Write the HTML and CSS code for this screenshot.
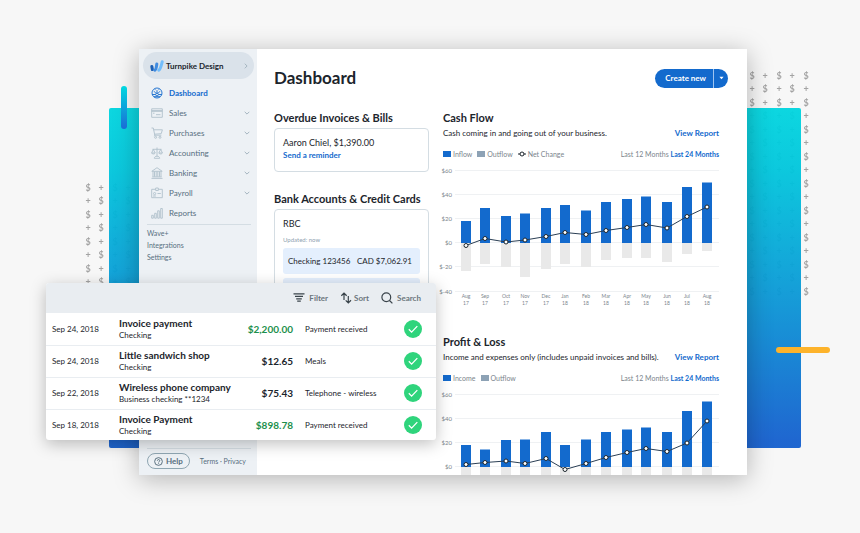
FILE: index.html
```html
<!DOCTYPE html>
<html lang="en">
<head>
  <meta charset="UTF-8">
  <meta name="viewport" content="width=device-width, initial-scale=1.0">
  <title>Dashboard</title>
  <link rel="stylesheet" href="styles.css">
</head>
<body>
  <!-- shared symbols -->
  <svg class="defs" aria-hidden="true">
    <defs>
      <pattern id="signs" width="27" height="27" patternUnits="userSpaceOnUse">
        <text x="7" y="10">$</text><text x="20" y="10">+</text>
        <text x="7" y="23">+</text><text x="20" y="23">$</text>
      </pattern>
      <marker id="dot" markerWidth="8" markerHeight="8" refX="4" refY="4" markerUnits="userSpaceOnUse">
        <circle cx="4" cy="4" r="2" fill="#fff" stroke="#1c252c" stroke-width="1"/>
      </marker>
      <symbol id="chevron" viewBox="0 0 6 6"><path d="M.7 1.8 3 4.1 5.3 1.8"/></symbol>
      <symbol id="check" viewBox="0 0 18 18"><circle cx="9" cy="9" r="9" fill="#2fd47c"/><path d="M4.8 9.3 7.6 12.1 13.3 6.1" fill="none" stroke="#fff" stroke-width="1.3"/></symbol>
    </defs>
  </svg>

  <div class="stage">
    <svg class="signs signs-left" aria-hidden="true"><rect width="100%" height="100%" fill="url(#signs)"/></svg>
    <svg class="signs signs-right" aria-hidden="true"><rect width="100%" height="100%" fill="url(#signs)"/></svg>
    <div class="backdrop"></div>

    <div class="window-wrap">
      <div class="window">
        <aside class="sidebar">
          <button class="company" type="button">
            <svg class="logo" viewBox="0 0 14 12"><path d="M1.8 6.4 2.4 9.6" stroke="#1c5fb5" stroke-width="3"/><path d="M4.8 10.2C6.2 9.8 6.4 6.6 6.8 4" stroke="#3f8be0" stroke-width="3"/><path d="M8.8 10.2C10.6 9.4 11.4 5 12.2 1.8" stroke="#72bdfb" stroke-width="3"/></svg>
            <span>Turnpike Design</span>
            <svg class="chevron right"><use href="#chevron"/></svg>
          </button>
          <nav class="menu">
            <a class="active" href="#"><svg class="icon" viewBox="0 0 12 12"><circle cx="6" cy="6" r="5"/><path d="M1.2 7.5h3.3M7.5 7.5h3.3M6 6.5V3.2M3 4.2l1.8 2M9 4.2l-1.8 2M2.8 9.7h6.4M4 2.3l.5.8M8 2.3l-.5.8"/><circle cx="6" cy="7.5" r="1.4"/></svg>Dashboard</a>
            <a href="#"><svg class="icon" viewBox="0 0 12 12"><path d="M.7 1.8h10.6v8.5H.7zM.7 4.3h10.6M.7 3.6h10.6M5 7.7h4.5M2 6.2h1.5"/></svg>Sales<svg class="chevron"><use href="#chevron"/></svg></a>
            <a href="#"><svg class="icon" viewBox="0 0 12 12"><path d="M.5 1h1.8l1.5 7.2h6.5M2.7 2.8h8.7l-1.2 3.9-6.7.5M3.7 8.2l-.5 1"/><circle cx="4.6" cy="10.3" r="1"/><circle cx="9" cy="10.3" r="1"/></svg>Purchases<svg class="chevron"><use href="#chevron"/></svg></a>
            <a href="#"><svg class="icon" viewBox="0 0 12 12"><path d="M6 .5v8.7M1.5 2.3h9M2.3 2.4.6 6h3.6L2.3 2.4M9.7 2.4 7.8 6h3.6L9.7 2.4M.6 6c.5 1.3 3 1.3 3.6 0M7.8 6c.5 1.3 3 1.3 3.6 0M3.3 11.3c0-2.8 5.4-2.8 5.4 0z"/></svg>Accounting<svg class="chevron"><use href="#chevron"/></svg></a>
            <a href="#"><svg class="icon" viewBox="0 0 12 12"><path d="M.8 4.3 6 .7l5.2 3.6zM.5 11.4h11M1.3 9.9h9.4M2 4.5v5.2M3.5 4.5v5.2M5.2 4.5v5.2M6.8 4.5v5.2M8.5 4.5v5.2M10 4.5v5.2"/></svg>Banking<svg class="chevron"><use href="#chevron"/></svg></a>
            <a href="#"><svg class="icon" viewBox="0 0 12 12"><path d="M4.7 2.3h-4v8.4h10.6V2.3h-4M4.7 1h2.6v2.5H4.7zM6.5 6.5h3.3M2 9h2.9"/><circle cx="3.6" cy="6.6" r="1.1"/></svg>Payroll<svg class="chevron"><use href="#chevron"/></svg></a>
            <a href="#"><svg class="icon" viewBox="0 0 12 12"><path d="M.7 8.3h1.6v2.9H.7zM3.7 6.3h1.6v4.9H3.7zM6.7 3.8h1.6v7.4H6.7zM9.7 1.5h1.6v9.7H9.7z"/></svg>Reports</a>
          </nav>
          <nav class="extra">
            <a href="#">Wave+</a>
            <a href="#">Integrations</a>
            <a href="#">Settings</a>
          </nav>
          <footer class="side-footer">
            <button class="help" type="button"><svg class="help-icon" viewBox="0 0 10 10"><circle cx="5" cy="5" r="4.3"/><path d="M3.7 4.1c0-1.7 2.7-1.7 2.7 0 0 1-1.3 1-1.3 2M5.1 7v.8"/></svg>Help</button>
            <p><a href="#">Terms</a> · <a href="#">Privacy</a></p>
          </footer>
        </aside>

        <main class="main">
          <header class="main-header">
            <h1>Dashboard</h1>
            <div class="create">
              <button class="create-new" type="button">Create new</button>
              <button class="create-more" type="button" aria-label="More"><svg viewBox="0 0 6 4"><path d="M.5.5h5L3 3.5z"/></svg></button>
            </div>
          </header>

          <div class="columns">
            <div class="col-left">
              <section>
                <h2>Overdue Invoices &amp; Bills</h2>
                <div class="box">
                  <p class="box-title">Aaron Chiel, $1,390.00</p>
                  <a class="link" href="#">Send a reminder</a>
                </div>
              </section>
              <section class="bank">
                <h2>Bank Accounts &amp; Credit Cards</h2>
                <div class="box">
                  <p class="box-title">RBC</p>
                  <p class="updated">Updated: now</p>
                  <div class="account"><span>Checking 123456</span><span>CAD $7,062.91</span></div>
                  <div class="account"></div>
                </div>
              </section>
            </div>

            <div class="col-right">
              <section class="report">
                <h2>Cash Flow</h2>
                <div class="row desc"><p>Cash coming in and going out of your business.</p><a class="link" href="#">View Report</a></div>
                <div class="row legend">
                  <p><i class="swatch in"></i>Inflow</p>
                  <p><i class="swatch out"></i>Outflow</p>
                  <p><svg class="net" viewBox="0 0 8 6"><path d="M0 3h8"/><circle cx="4" cy="3" r="2"/></svg>Net Change</p>
                  <div class="range"><a href="#">Last 12 Months</a> <a class="link" href="#">Last 24 Months</a></div>
                </div>
                <svg class="chart" viewBox="0 0 276 142">
                  <path class="grid" d="M12 5.5H276M12 29.5H276M12 53.5H276M12 77.5H276M12 101.5H276M12 126.5H276"/>
                  <g class="y-axis"><text x="9" y="8">$60</text><text x="9" y="32">$40</text><text x="9" y="56">$20</text><text x="9" y="80">$0</text><text x="9" y="104">$-20</text><text x="9" y="129">$-40</text></g>
                  <path class="bars-out" d="M23 78V106M42 78V99M63 78V102M82 78V112M103 78V104M122 78V99M143 78V102M163 78V95M184 78V93M203 78V93M224 78V97M244 78V89M264 78V86"/>
                  <path class="bars-in" d="M23 78V56M42 78V43M63 78V51M82 78V48.5M103 78V43M122 78V40M143 78V45.5M163 78V37M184 78V34M203 78V31.5M224 78V37M244 78V22M264 78V17.5"/>
                  <polyline class="line" points="23,80.5 42,73.5 63,77 82,75 103,71.5 122,67.5 143,69.5 163,65.5 184,62.5 203,59.5 224,63 244,51.5 264,42"/>
                  <g class="x-axis">
                    <text x="23" y="133">Aug</text><text x="42" y="133">Sep</text><text x="63" y="133">Oct</text><text x="82" y="133">Nov</text><text x="103" y="133">Dec</text><text x="122" y="133">Jan</text><text x="143" y="133">Feb</text><text x="163" y="133">Mar</text><text x="184" y="133">Apr</text><text x="203" y="133">May</text><text x="224" y="133">Jun</text><text x="244" y="133">Jul</text><text x="264" y="133">Aug</text>
                    <text x="23" y="140">17</text><text x="42" y="140">17</text><text x="63" y="140">17</text><text x="82" y="140">17</text><text x="103" y="140">17</text><text x="122" y="140">18</text><text x="143" y="140">18</text><text x="163" y="140">18</text><text x="184" y="140">18</text><text x="203" y="140">18</text><text x="224" y="140">18</text><text x="244" y="140">18</text><text x="264" y="140">18</text>
                  </g>
                </svg>
              </section>

              <section class="report">
                <h2>Profit &amp; Loss</h2>
                <div class="row desc"><p>Income and expenses only (includes unpaid invoices and bills).</p><a class="link" href="#">View Report</a></div>
                <div class="row legend">
                  <p><i class="swatch in"></i>Income</p>
                  <p><i class="swatch out"></i>Outflow</p>
                  <div class="range"><a href="#">Last 12 Months</a> <a class="link" href="#">Last 24 Months</a></div>
                </div>
                <svg class="chart" viewBox="0 0 276 142">
                  <path class="grid" d="M12 5.5H276M12 29.5H276M12 53.5H276M12 77.5H276"/>
                  <g class="y-axis"><text x="9" y="8">$60</text><text x="9" y="32">$40</text><text x="9" y="56">$20</text><text x="9" y="80">$0</text></g>
                  <path class="bars-out" d="M23 78V106M42 78V99M63 78V102M82 78V112M103 78V104M122 78V99M143 78V102M163 78V95M184 78V93M203 78V93M224 78V97M244 78V89M264 78V88"/>
                  <path class="bars-in" d="M23 78V56M42 78V60.5M63 78V51M82 78V50.5M103 78V43M122 78V56M143 78V50.5M163 78V43M184 78V40.5M203 78V38.5M224 78V43M244 78V22M264 78V12.5"/>
                  <polyline class="line" points="23,75.5 42,73.5 63,72 82,74.5 103,69.5 122,80.5 143,74.5 163,68.5 184,63.5 203,59.5 224,62.5 244,54 264,32"/>
                </svg>
              </section>
            </div>
          </div>
        </main>
      </div>

      <div class="transactions">
        <div class="toolbar">
          <button type="button"><svg class="tool-icon" viewBox="0 0 12 12"><path d="M.5 1.9h11M2 4.4h8M3.2 6.8h5.6M4.2 9.2h3.6"/></svg>Filter</button>
          <button type="button" class="sort"><svg class="tool-icon" viewBox="0 0 12 12"><path d="M4 8V1.2M1.3 3.8 4 1.2l2.7 2.6M8.3 4v6.9M5.7 8.3l2.6 2.6L11 8.3"/></svg>Sort</button>
          <button type="button"><svg class="tool-icon" viewBox="0 0 12 12"><circle cx="5.3" cy="5.3" r="4.4"/><path d="m8.5 8.5 2.9 2.9"/></svg>Search</button>
        </div>
        <table>
          <tr><td class="date">Sep 24, 2018</td><td class="name"><strong>Invoice payment</strong>Checking</td><td class="amount income">$2,200.00</td><td class="category">Payment received</td><td class="status"><svg><use href="#check"/></svg></td></tr>
          <tr><td class="date">Sep 24, 2018</td><td class="name"><strong>Little sandwich shop</strong>Checking</td><td class="amount">$12.65</td><td class="category">Meals</td><td class="status"><svg><use href="#check"/></svg></td></tr>
          <tr><td class="date">Sep 22, 2018</td><td class="name"><strong>Wireless phone company</strong>Business checking **1234</td><td class="amount">$75.43</td><td class="category">Telephone - wireless</td><td class="status"><svg><use href="#check"/></svg></td></tr>
          <tr><td class="date">Sep 18, 2018</td><td class="name"><strong>Invoice Payment</strong>Checking</td><td class="amount income">$898.78</td><td class="category">Payment received</td><td class="status"><svg><use href="#check"/></svg></td></tr>
        </table>
      </div>
    </div>

    <div class="bar bar-blue"></div>
    <div class="bar bar-yellow"></div>
  </div>
</body>
</html>
```
FILE: styles.css
```css
* {
  margin: 0;
  padding: 0;
  box-sizing: border-box;
}

body {
  font-family: Lato, "Open Sans", sans-serif;
  font-size: 8px;
  line-height: 12px;
  color: #1c252c;
  background: #f7f7f7;
}

a {
  color: inherit;
  text-decoration: none;
}

button {
  font: inherit;
  color: inherit;
  background: none;
  border: none;
  cursor: pointer;
}

.defs {
  position: absolute;
  width: 0;
  height: 0;
}

/* backdrop */
.stage {
  position: relative;
  height: 100vh;
  padding: 49px 113px 58px 139px;
  overflow: hidden;
}

.backdrop {
  position: absolute;
  top: 108px;
  right: 59px;
  bottom: 85px;
  left: 109px;
  border-radius: 2px;
  background: linear-gradient(#00d5df, #00c6dc 18%, #0a98d6 55%, #145fce 98%);
  opacity: 0.95;
}

.signs {
  position: absolute;
}

.signs-left {
  top: 181px;
  left: 81px;
  width: 54px;
  height: 108px;
}

.signs-right {
  top: 69px;
  right: 47px;
  width: 68px;
  height: 229px;
}

#signs {
  font-size: 9px;
  font-weight: 700;
  fill: #a3a3a3;
  text-anchor: middle;
}

.bar {
  position: absolute;
  border-radius: 3px;
}

.bar-blue {
  top: 86px;
  left: 121px;
  width: 6px;
  height: 43px;
  background: linear-gradient(#00d9e0, #1b6bd6);
}

.bar-yellow {
  top: 347px;
  right: 30px;
  width: 54px;
  height: 6px;
  background: #fdb32b;
}

/* window */
.window-wrap {
  position: relative;
  height: 100%;
}

.window {
  display: flex;
  height: 100%;
  background: #fff;
  box-shadow: 0 4px 24px rgba(0, 0, 0, 0.28);
  overflow: hidden;
}

/* sidebar */
.sidebar {
  display: flex;
  flex-direction: column;
  flex: 0 0 118px;
  padding: 3px 3px 6px 4px;
  color: #576f80;
  background: #edf1f5;
}

.company {
  display: flex;
  align-items: center;
  height: 27px;
  padding: 0 5px 0 7px;
  border-radius: 14px;
  color: #1c252c;
  background: #dae2ea;
  font-weight: 700;
}

.logo {
  width: 14px;
  height: 12px;
  margin-right: 2px;
  fill: none;
  stroke-linecap: round;
}

.chevron {
  width: 6px;
  height: 6px;
  margin-left: auto;
  fill: none;
  stroke: #a5b5c0;
}

.chevron.right {
  transform: rotate(-90deg);
}

.menu {
  padding: 4px 4px 0 8px;
}

.menu a {
  display: flex;
  align-items: center;
  height: 20px;
}

.icon {
  width: 12px;
  height: 12px;
  margin-right: 6px;
  fill: none;
  stroke: #b0c1cc;
  stroke-width: 0.9;
}

.menu .active {
  color: #136acd;
  font-weight: 700;
}

.active .icon {
  stroke: #136acd;
}

.extra {
  margin: 1px 3px 0 4px;
  padding-top: 2px;
  border-top: 1px solid #d4dde3;
  font-size: 7px;
}

.extra a {
  display: block;
}

.side-footer {
  display: flex;
  align-items: center;
  gap: 10px;
  margin: auto 3px 0 4px;
  padding-top: 4px;
  border-top: 1px solid #d4dde3;
  font-size: 7px;
}

.help {
  display: flex;
  align-items: center;
  gap: 3px;
  height: 16px;
  padding: 0 6px;
  border: 1px solid #8fa6b2;
  border-radius: 8px;
  font-size: 8px;
  font-weight: 700;
}

.help-icon {
  width: 9px;
  height: 9px;
  fill: none;
  stroke: #4d6575;
}

/* main */
.main {
  flex: 1;
  min-width: 0;
  padding: 17px 28px 0 17px;
}

.main-header {
  display: flex;
  align-items: center;
  justify-content: space-between;
  height: 24px;
  margin-right: -9px;
  margin-bottom: 20px;
}

h1 {
  font-size: 17px;
  line-height: 24px;
}

h2 {
  font-size: 11px;
  line-height: 15px;
  white-space: nowrap;
}

.create {
  display: flex;
  height: 19px;
  border-radius: 10px;
  color: #fff;
  background: #136acd;
  font-weight: 700;
}

.create-new {
  padding: 0 7px 0 10px;
}

.create-more {
  width: 15px;
  border-left: 1px solid #9fc4f0;
}

.create-more svg {
  display: block;
  width: 5px;
  height: 4px;
  margin: 0 auto;
  fill: #fff;
}

.columns {
  display: flex;
  gap: 14px;
}

.col-left {
  flex: 0 0 155px;
}

.col-right {
  flex: 1;
  min-width: 0;
}

.box {
  margin-top: 3px;
  padding: 8px;
  border: 1px solid #d4dde3;
  border-radius: 4px;
}

.box-title {
  font-size: 9px;
}

.link {
  color: #136acd;
  font-weight: 700;
}

.box .link {
  display: block;
  margin-bottom: 2px;
}

.bank {
  margin-top: 19px;
}

.updated {
  margin-top: 4px;
  color: #8fa3b1;
  font-size: 6px;
}

.account {
  display: flex;
  align-items: center;
  justify-content: space-between;
  height: 26px;
  margin: 2px 0 4px;
  padding: 0 8px 0 5px;
  border-radius: 3px;
  background: #e4effd;
  white-space: nowrap;
}

.report {
  margin-bottom: 27px;
}

.row {
  display: flex;
  align-items: center;
}

.desc {
  justify-content: space-between;
  margin-top: 2px;
  white-space: nowrap;
}

.legend {
  gap: 5px;
  margin: 9px 0 5px;
  color: #7b858c;
  font-size: 7px;
  white-space: nowrap;
}

.legend p {
  display: flex;
  align-items: center;
  gap: 2px;
}

.swatch {
  width: 8px;
  height: 6px;
}

.in {
  background: #136acd;
}

.out {
  background: #8da2b5;
}

.net {
  width: 8px;
  height: 6px;
  fill: #fff;
  stroke: #1c252c;
}

.range {
  margin-left: auto;
}

.chart {
  display: block;
  width: 100%;
  overflow: visible;
  font-size: 5px;
  fill: #7b858c;
}

.grid {
  stroke: #eff1f3;
}

.y-axis {
  font-size: 6px;
  text-anchor: end;
}

.x-axis {
  text-anchor: middle;
}

.bars-in {
  stroke: #136acd;
  stroke-width: 10;
}

.bars-out {
  stroke: #e9e9e9;
  stroke-width: 10;
}

.line {
  fill: none;
  stroke: #2b3f55;
  marker-start: url(#dot);
  marker-mid: url(#dot);
  marker-end: url(#dot);
}

/* transactions card, lies over the window */
.transactions {
  position: absolute;
  top: 234px;
  left: -93px;
  width: 390px;
  border-radius: 3px;
  background: #fff;
  box-shadow: 0 4px 16px rgba(0, 0, 0, 0.25);
  overflow: hidden;
}

.toolbar {
  display: flex;
  align-items: center;
  justify-content: flex-end;
  gap: 12px;
  height: 30px;
  padding-right: 15px;
  color: #6b767d;
  background: #e9edf1;
  font-weight: 700;
}

.toolbar button {
  display: flex;
  align-items: center;
  gap: 4px;
}

.toolbar .sort {
  gap: 2px;
}

.tool-icon {
  width: 12px;
  height: 12px;
  fill: none;
  stroke: #3a444b;
  stroke-width: 1.2;
}

table {
  width: 100%;
  table-layout: fixed;
  border-collapse: collapse;
}

td {
  height: 32px;
  border-bottom: 1px solid #e9edf1;
  vertical-align: middle;
  white-space: nowrap;
}

tr:last-child td {
  height: 31px;
  border-bottom: none;
}

.date {
  width: 73px;
  padding-left: 6px;
}

.name {
  width: 120px;
}

.name strong {
  display: block;
  font-size: 10px;
}

.amount {
  width: 54px;
  font-size: 10px;
  font-weight: 700;
  text-align: right;
}

.income {
  color: #1c8f4c;
}

.category {
  padding-left: 12px;
}

.status {
  width: 32px;
}

.status svg {
  display: block;
  width: 18px;
  height: 18px;
}
```
